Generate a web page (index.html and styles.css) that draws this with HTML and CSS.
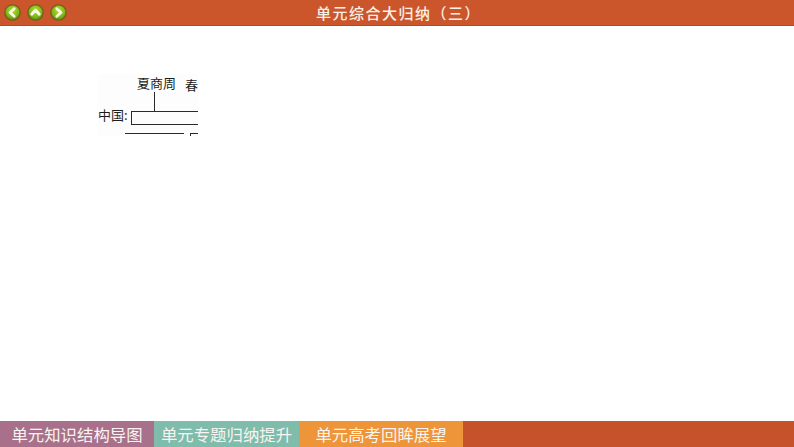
FILE: index.html
```html
<!DOCTYPE html>
<html lang="zh">
<head>
<meta charset="utf-8">
<title>单元综合大归纳(三)</title>
<link rel="stylesheet" href="styles.css">
</head>
<body>
<div class="page">
  <header class="topbar">
    <nav class="navs">
      <svg class="nav" viewBox="0 0 18 18"><defs><radialGradient id="g" cx="50%" cy="35%" r="65%"><stop offset="0" stop-color="#b4dc34"/><stop offset="0.7" stop-color="#82b81a"/><stop offset="1" stop-color="#5f9410"/></radialGradient></defs><circle class="ring" cx="9" cy="9" r="8.8"/><circle fill="url(#g)" cx="9" cy="9" r="7.4"/><path class="chev" d="M10.8 5 6.4 9l4.4 4"/></svg>
      <svg class="nav" viewBox="0 0 18 18"><circle class="ring" cx="9" cy="9" r="8.8"/><circle fill="url(#g)" cx="9" cy="9" r="7.4"/><path class="chev" d="M5 10.8 9 6.4l4 4.4"/></svg>
      <svg class="nav" viewBox="0 0 18 18"><circle class="ring" cx="9" cy="9" r="8.8"/><circle fill="url(#g)" cx="9" cy="9" r="7.4"/><path class="chev" d="M7.2 5 11.6 9l-4.4 4"/></svg>
    </nav>
    <h1 class="title">单元综合大归纳（三）</h1>
  </header>
  <main class="content">
    <figure class="diagram">
      <span class="label label-xia">夏商周</span>
      <span class="label label-chun">春</span>
      <span class="label label-cn">中国:</span>
      <span class="line stem"></span>
      <span class="box"></span>
      <span class="line rule-a"></span>
      <span class="line rule-b"></span>
      <span class="line tick"></span>
    </figure>
  </main>
  <footer class="tabs">
    <span class="tab tab-a">单元知识结构导图</span>
    <span class="tab tab-b">单元专题归纳提升</span>
    <span class="tab tab-c">单元高考回眸展望</span>
  </footer>
</div>
</body>
</html>
```
FILE: styles.css
```css
* { box-sizing: border-box; }
html, body { margin: 0; padding: 0; background: #fff; }
body { font-family: "Noto Sans CJK SC", "Liberation Sans", sans-serif; }
.page { width: 794px; height: 447px; display: flex; flex-direction: column; overflow: hidden; }

.topbar {
  height: 26px;
  flex: none;
  position: relative;
  display: flex;
  align-items: center;
  background: #cc562b;
  border-bottom: 1px solid #b34a22;
}
.navs { display: flex; gap: 6px; padding-left: 4px; position: relative; z-index: 1; margin-top: -1px; }
.nav { width: 17px; height: 17px; display: block; }
.ring { fill: #74601a; }
.chev { fill: none; stroke: #f6fbe8; stroke-width: 3; stroke-linecap: round; stroke-linejoin: round; }
.title {
  position: absolute;
  left: 0; right: 0; top: 0;
  margin: 0;
  padding-left: 3px;
  line-height: 26px;
  text-align: center;
  font-size: 15px;
  font-weight: 500;
  letter-spacing: 1.5px;
  color: #f8efe6;
}

.content { flex: 1; min-height: 0; padding: 48px 0 0 97px; }
.diagram { position: relative; margin: 0; width: 101px; height: 62px; background: #fdfdfd; overflow: hidden; }
.label { position: absolute; font-size: 13px; line-height: 16px; color: #1c1c1c; white-space: nowrap; }
.label-xia { left: 40px; top: 1px; }
.label-chun { left: 88px; top: 3px; }
.label-cn { left: 1px; top: 33px; }
.line { position: absolute; background: #2a2a2a; }
.stem { left: 57px; top: 18px; width: 1px; height: 20px; }
.box { position: absolute; left: 34px; top: 37px; width: 80px; height: 14px; border: 1px solid #2a2a2a; }
.rule-a { left: 28px; top: 59px; width: 59px; height: 1px; }
.rule-b { left: 93px; top: 59px; width: 8px; height: 1px; }
.tick { left: 93px; top: 59px; width: 1px; height: 3px; }

.tabs { height: 26px; flex: none; display: flex; background: #c5522a; }
.tab { display: flex; align-items: center; justify-content: center; font-size: 16.4px; line-height: 26px; color: #f8f4f0; }
.tab-a { width: 154px; background: #a8708a; }
.tab-b { width: 145px; background: #7fbcac; }
.tab-c { width: 164px; background: #ef9539; }
```
